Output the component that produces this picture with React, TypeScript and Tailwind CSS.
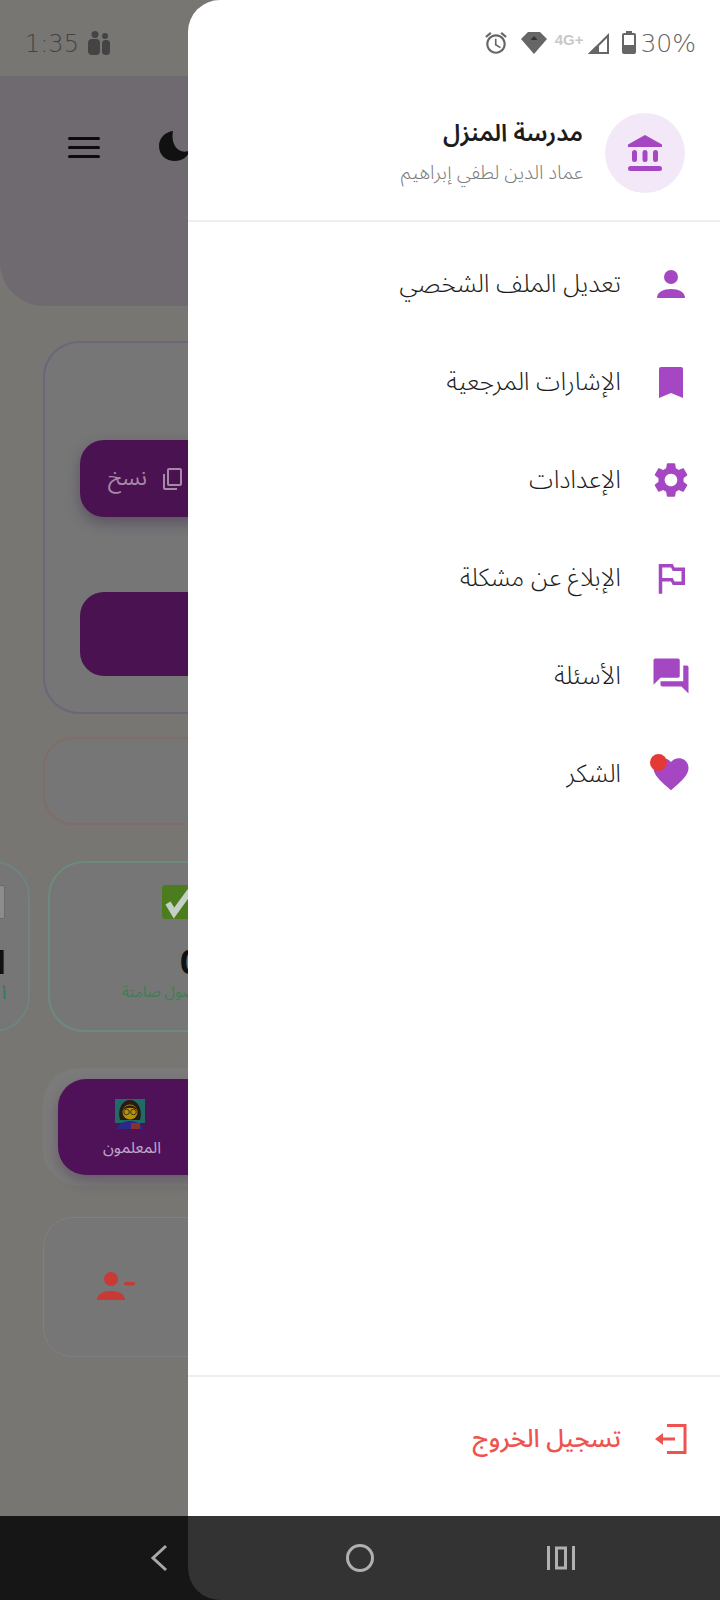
import React from "react";

const P = "#a547c2";
const Ic = ({ d, c = P, cls }: { d: string; c?: string; cls: string }) => (
  <svg viewBox="0 0 24 24" className={cls} fill={c}><path d={d} /></svg>
);

const items: { t: string; icon: React.ReactNode }[] = [
  { t: "تعديل الملف الشخصي", icon: <svg viewBox="0 0 28 28" className="w-[28px] h-[28px]" fill={P}><circle cx="14" cy="7" r="7" /><path d="M0 28c0-6 6.500-9 14-9s14 3 14 9z" /></svg> },
  { t: "الإشارات المرجعية", icon: <svg viewBox="0 0 24 31" className="w-[24px] h-[31px]" fill={P}><path d="M2 0h20a2 2 0 0 1 2 2v29l-12-5-12 5V2a2 2 0 0 1 2-2z" /></svg> },
  { t: "الإعدادات", icon: <Ic cls="w-[42px] h-[42px]" d="M19.140 12.940c.04-.3.060-.61.060-.94 0-.32-.02-.64-.07-.94l2.030-1.580c.18-.14.230-.41.120-.61l-1.920-3.320c-.12-.22-.37-.29-.59-.22l-2.390.96c-.5-.38-1.030-.7-1.620-.94l-.36-2.540c-.04-.24-.24-.41-.48-.41h-3.840c-.24 0-.43.170-.47.410l-.36 2.540c-.59.240-1.130.570-1.620.94l-2.390-.96c-.22-.08-.47 0-.59.220L2.740 8.870c-.12.210-.08.470.12.610l2.030 1.580c-.05.3-.09.630-.09.940s.02.640.07.940l-2.030 1.580c-.18.140-.23.410-.12.610l1.920 3.320c.12.220.37.290.59.220l2.390-.96c.5.380 1.030.7 1.620.94l.36 2.540c.05.240.24.410.48.410h3.840c.24 0 .44-.17.47-.41l.36-2.540c.59-.24 1.130-.56 1.620-.94l2.390.96c.22.080.47 0 .59-.22l1.920-3.320c.12-.22.070-.47-.12-.61l-2.010-1.580zM12 15.600c-1.980 0-3.600-1.620-3.600-3.600s1.620-3.600 3.600-3.600 3.600 1.620 3.600 3.600-1.620 3.600-3.600 3.600z" /> },
  { t: "الإبلاغ عن مشكلة", icon: <Ic cls="w-[42px] h-[42px]" d="M14 6l-1-2H5v17h2v-7h5l1 2h7V6h-6zm4 8h-4l-1-2H7V6h5l1 2h5v6z" /> },
  { t: "الأسئلة", icon: <Ic cls="w-[42px] h-[42px]" d="M21 6h-2v9H6v2c0 .55.45 1 1 1h11l4 4V7c0-.55-.45-1-1-1zm-4 6V3c0-.55-.45-1-1-1H3c-.55 0-1 .45-1 1v14l4-4h10c.55 0 1-.45 1-1z" /> },
  {
    t: "الشكر",
    icon: (
      <span className="relative block w-[42px] h-[42px]">
        <Ic cls="w-[42px] h-[42px]" d="M12 21.350l-1.450-1.320C5.400 15.360 2 12.280 2 8.500 2 5.420 4.420 3 7.500 3c1.740 0 3.410.81 4.500 2.090C13.090 3.810 14.760 3 16.500 3 19.580 3 22 5.420 22 8.500c0 3.780-3.400 6.860-8.550 11.540L12 21.350z" />
        <span className="absolute left-[0px] top-[1px] w-[17px] h-[17px] rounded-full bg-[#e53935]" />
      </span>
    ),
  },
];

export default function App() {
  return (
    <div dir="ltr" className="relative w-[720px] h-[1600px] overflow-hidden bg-[#777672] font-['Noto_Sans_Arabic','DejaVu_Sans',sans-serif]">
      {/* dimmed page behind the drawer */}
      <div className="flex flex-col h-full">
        <div className="h-[76px] flex items-start pl-[25px] pt-[28px] gap-[9px]">
          <span className="text-[24px] leading-[32px] text-[#444] font-['DejaVu_Sans_Light','DejaVu_Sans',sans-serif]">1:35</span>
          <svg viewBox="0 0 22 24" className="w-[22px] h-[24px] mt-[3px]" fill="#444"><circle cx="7" cy="3.500" r="3.500" /><circle cx="17" cy="5" r="3" /><rect x="0" y="8" width="12" height="16" rx="4" /><rect x="14" y="9" width="8" height="15" rx="3.500" /></svg>
        </div>
        <div className="h-[230px] bg-[#6e6a70] rounded-bl-[44px] pl-[68px] pt-[60px] flex items-start gap-[60px]">
          <div className="mt-[1px] flex flex-col gap-[6px] w-[32px]">
            <div className="h-[3px] rounded bg-[#0c0a0e]" />
            <div className="h-[3px] rounded bg-[#0c0a0e]" />
            <div className="h-[3px] rounded bg-[#0c0a0e]" />
          </div>
          <svg viewBox="0 0 32 32" className="w-[32px] h-[32px] -mt-[6px] -ml-[1px]" fill="#111"><path d="M14 1C6 2 0 8 0 16c0 9 7 15 16 15 7 0 13-4 15-11-3 2-6 2-9 1-6-2-10-10-8-20z" /></svg>
        </div>
        <div className="pl-[43px] pt-[35px]">
          <div className="w-[400px] h-[373px] border-2 border-[#6f6478] rounded-[36px] pl-[35px] pt-[97px] bg-[#767677]">
            <div className="h-[77px] rounded-[24px] bg-[#4b1252] shadow-[0_6px_14px_rgba(50,20,60,0.35)] flex items-center pl-[28px] gap-[14px] text-[22px] text-[#a58aa8]">
              <span dir="rtl">نسخ</span>
              <svg viewBox="0 0 24 24" className="w-[24px] h-[24px]" fill="#a58aa8"><path d="M16 1H4c-1.100 0-2 .9-2 2v14h2V3h12V1zm3 4H8c-1.100 0-2 .9-2 2v14c0 1.100.9 2 2 2h11c1.100 0 2-.9 2-2V7c0-1.100-.9-2-2-2zm0 16H8V7h11v14z" transform="matrix(1 0 0 -1 0 24)" /></svg>
            </div>
            <div className="mt-[75px] h-[84px] rounded-[24px] bg-[#4b1252]" />
          </div>
          <div className="mt-[23px] w-[400px] h-[88px] border-2 border-[#806c68] rounded-[30px] bg-[#767676]" />
        </div>
        <div className="mt-[36px] flex gap-[18px] ml-[-170px] h-[171px]">
          <div className="relative w-[200px] border-2 border-[#6d8480] rounded-[36px] bg-[#757675]">
            <div className="absolute right-[23px] top-[22px] w-[8px] h-[34px] rounded-[2px] bg-[#8c8c8c] border border-[#6b6b6b]" />
            <div className="absolute right-[19px] top-[80px] text-[34px] leading-[40px] font-bold text-[#111]">1</div>
            <div className="absolute right-[22px] top-[121px] text-[15px] leading-[20px] text-[#1e7a66]">أ</div>
          </div>
          <div className="relative w-[400px] border-2 border-[#6e8a7e] rounded-[36px] bg-[#757675]">
            <svg viewBox="0 0 34 34" className="absolute left-[112px] top-[22px] w-[34px] h-[34px]"><rect width="34" height="34" rx="3" fill="#4b7d1f" /><path d="M6 18l6 10L28 6" fill="none" stroke="#c6cfc6" strokeWidth="6" /></svg>
            <div className="absolute left-[130px] top-[80px] text-[34px] leading-[40px] font-bold text-[#111]">0</div>
            <div dir="rtl" className="absolute left-[72px] top-[119px] whitespace-nowrap text-[15px] leading-[20px] text-[#3e7f55]">وصول صامتة</div>
          </div>
        </div>
        <div className="ml-[43px] mt-[36px] w-[400px] h-[118px] bg-[#7c7b7b] rounded-[36px] pl-[15px] pt-[11px]">
          <div className="w-[300px] h-[96px] rounded-[28px] bg-[#4f1259] shadow-[0_6px_14px_rgba(50,20,60,0.3)] pl-[43px] pt-[19px] text-[#c0a6c8]">
            <svg viewBox="0 0 32 32" className="w-[32px] h-[32px] ml-[13px]">
              <rect x="1" y="1" width="30" height="24" fill="#1f6b66" />
              <path d="M6 22C3 10 9 2 16 2s13 8 10 20z" fill="#2a1a12" />
              <circle cx="16" cy="14" r="7.500" fill="#b8900a" />
              <path d="M9 12c1-6 13-6 14 0-4-3-10-3-14 0z" fill="#2a1a12" />
              <circle cx="12.500" cy="14" r="2.800" fill="none" stroke="#332" strokeWidth="1" />
              <circle cx="19.500" cy="14" r="2.800" fill="none" stroke="#332" strokeWidth="1" />
              <path d="M3 31c2-6 8-8 13-8s11 2 13 8z" fill="#2b2a8a" />
              <rect x="17" y="25" width="9" height="6" fill="#8a2f2a" />
            </svg>
            <div dir="rtl" className="w-[60px] text-right text-[16px] leading-[20px] mt-[8px] whitespace-nowrap">المعلمون</div>
          </div>
        </div>
        <div className="ml-[43px] mt-[31px] w-[400px] h-[140px] border border-[#808080] rounded-[30px] pl-[53px] pt-[54px] bg-[#767676]">
          <svg viewBox="0 0 38 28" className="w-[38px] h-[28px]" fill="#c73a36"><circle cx="14" cy="7" r="7" /><path d="M0 28c0-6 6.500-9 14-9s14 3 14 9z" /><rect x="27" y="10" width="11" height="3.500" rx="1.700" /></svg>
        </div>
      </div>

      {/* navigation bar */}
      <div className="absolute left-0 right-0 bottom-0 h-[84px] bg-[#161616]" />
      <div className="absolute left-[188px] right-0 bottom-0 h-[84px] bg-[#333333] rounded-bl-[32px]" />
      <svg viewBox="0 0 18 28" className="absolute left-[150px] top-[1544px] w-[18px] h-[28px]" fill="none" stroke="#a8a8a8" strokeWidth="3"><path d="M16 2L3 14l13 12" /></svg>
      <div className="absolute left-[346px] top-[1544px] w-[28px] h-[28px] rounded-full border-[3px] border-[#b0b0b0]" />
      <svg viewBox="0 0 28 24" className="absolute left-[547px] top-[1546px] w-[28px] h-[24px]" fill="none" stroke="#b0b0b0" strokeWidth="3"><path d="M1.500 0v24M26.500 0v24" /><rect x="9.500" y="2" width="9" height="20" /></svg>

      {/* drawer */}
      <aside className="absolute left-[188px] top-0 w-[532px] h-[1516px] bg-white rounded-tl-[32px] flex flex-col" dir="rtl">
        <div className="h-[76px] flex items-start pr-[24px] pt-[28px]" dir="ltr">
          <div className="ml-auto flex items-start">
            <svg viewBox="0 0 24 24" className="w-[26px] h-[26px] mt-[2px]" fill="#666"><path d="M22 5.720l-4.600-3.860-1.290 1.530 4.600 3.860L22 5.720zM7.880 3.390L6.600 1.860 2 5.710l1.290 1.530 4.590-3.850zM12.500 8H11v6l4.750 2.850.75-1.230-4-2.370V8zM12 4c-4.970 0-9 4.030-9 9s4.030 9 9 9 9-4.030 9-9-4.030-9-9-9zm0 16c-3.870 0-7-3.130-7-7s3.130-7 7-7 7 3.130 7 7-3.130 7-7 7z" /></svg>
            <svg viewBox="0 0 26 22" className="w-[26px] h-[22px] mt-[4px] ml-[12px]" fill="#666"><path d="M7 0h12l7 7-13 15L0 7z" /><path d="M13 4l3.500 4h-7z" fill="#333" /></svg>
            <span className="text-[15px] leading-[14px] font-semibold text-[#c8c8c8] mt-[5px] font-['Liberation_Sans',sans-serif] ml-[8px]">4G+</span>
            <svg viewBox="0 0 21 21" className="w-[21px] h-[21px] mt-[5px] ml-[5px]" fill="#666"><path d="M21 0v21H0z" /><path d="M19 5v14H5z" fill="#fff" /><path d="M11 13v8H0l8-8z" /></svg>
            <svg viewBox="0 0 14 23" className="w-[14px] h-[23px] mt-[3px] ml-[13px]" fill="#666"><rect x="4" width="6" height="3" /><rect y="2" width="14" height="21" rx="2" /><rect x="2" y="4" width="10" height="10" fill="#fff" /></svg>
            <span className="text-[25px] leading-[32px] text-[#666] font-['DejaVu_Sans_Light','DejaVu_Sans',sans-serif] ml-[4px]">30%</span>
          </div>
        </div>
        <div className="h-[146px] flex items-start pr-[35px] pt-[37px] gap-[22px] border-b-2 border-[#eeeeee]">
          <div className="w-[80px] h-[80px] rounded-full bg-[#f3e8f7] flex items-center justify-center shrink-0">
            <svg viewBox="0 0 34 36" className="w-[34px] h-[36px]" fill={P}><path d="M17 0L0 9.500V12h34V9.500z" /><rect x="4" y="15" width="5" height="12" rx="2.500" /><rect x="14.500" y="15" width="5" height="12" rx="2.500" /><rect x="25" y="15" width="5" height="12" rx="2.500" /><rect x="0" y="31" width="34" height="5" rx="2.500" /></svg>
          </div>
          <div className="flex flex-col pt-[3px]">
            <div className="text-[24px] leading-[36px] font-semibold text-[#1c1c1c]">مدرسة المنزل</div>
            <div className="text-[19.500px] leading-[28px] mt-[7px] text-[#7c7c7c] font-light">عماد الدين لطفي إبراهيم</div>
          </div>
        </div>
        <nav className="flex-1 flex flex-col pt-[13px]">
          {items.map((it) => (
            <div key={it.t} className="h-[98px] flex items-center pr-[27px]">
              <div className="w-[44px] flex justify-center shrink-0">{it.icon}</div>
              <div className="mr-[28px] text-[25px] leading-[36px] font-light text-[#1c1c1c]">{it.t}</div>
            </div>
          ))}
        </nav>
        <div className="h-[141px] border-t-2 border-[#eeeeee] flex items-center pr-[27px] pb-[16px]">
          <div className="w-[44px] flex justify-center shrink-0">
            <svg viewBox="0 0 32 30" className="w-[32px] h-[30px]" fill="none" stroke="#ef5350" strokeWidth="3"><path d="M12 1.500h18v27H12" /><path d="M20 15H8" /><path d="M8 9v12L0 15z" fill="#ef5350" stroke="none" /></svg>
          </div>
          <div className="mr-[28px] text-[25px] leading-[36px] font-medium text-[#ef5350]">تسجيل الخروج</div>
        </div>
      </aside>
    </div>
  );
}
